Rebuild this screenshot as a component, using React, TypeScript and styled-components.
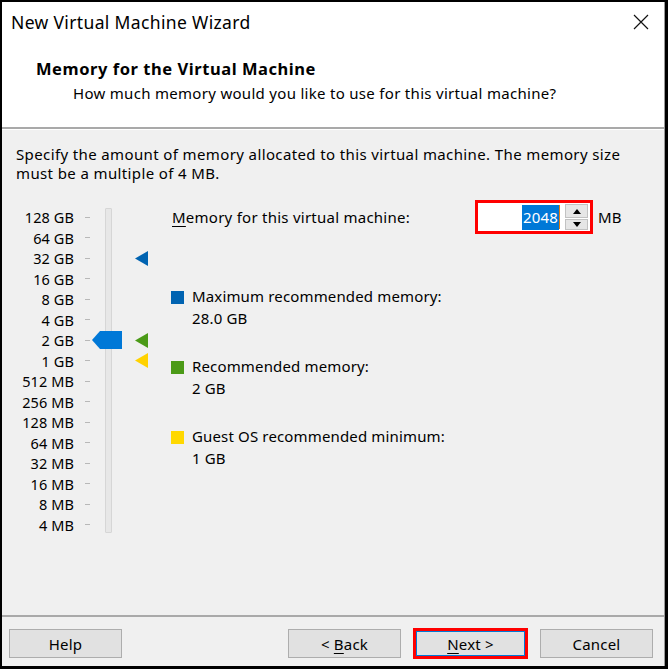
import React from "react";
import styled, { createGlobalStyle } from "styled-components";

const GlobalStyle = createGlobalStyle`
  html, body { margin: 0; padding: 0; background: #000; }
  body { font-family: "Noto Sans", "Liberation Sans", sans-serif; color: #000; }
  * { box-sizing: border-box; }
`;

const Frame = styled.div`
  width: 668px;
  height: 669px;
  border-style: solid;
  border-color: #000;
  border-width: 2px 3px 3px 2px;
  background: #f0f0f0;
  display: flex;
  flex-direction: column;
  overflow: hidden;
`;

const Window = styled.div`
  flex: 1;
  display: flex;
  flex-direction: column;
  border-right: 1px solid #9a9a9a;
  background: #f0f0f0;
`;

const Header = styled.div`
  height: 125px;
  background: #fff;
  display: flex;
  flex-direction: column;
`;

const TitleBar = styled.div`
  height: 40px;
  display: flex;
  align-items: center;
  justify-content: space-between;
  padding: 0 15px 0 9px;
`;

const TitleText = styled.div`
  font-size: 17.5px;
  letter-spacing: 0.35px;
`;

const HeaderTitle = styled.div`
  margin: 17px 0 0 34px;
  font-size: 16.5px;
  font-weight: 700;
  line-height: 20px;
  letter-spacing: 0.55px;
`;

const HeaderSub = styled.div`
  margin: 4px 0 0 71px;
  font-size: 15px;
  line-height: 20px;
  letter-spacing: 0.3px;
`;

const Separator = styled.div`
  height: 3px;
  border-top: 2px solid #a9a9a9;
  border-bottom: 1px solid #ffffff;
`;

const Body = styled.div`
  flex: 1;
  padding: 15px 0 0 14px;
  display: flex;
  flex-direction: column;
`;

const Description = styled.p`
  margin: 0;
  font-size: 15px;
  line-height: 19px;
  letter-spacing: 0.38px;
  white-space: nowrap;
`;

const Main = styled.div`
  display: flex;
  align-items: flex-start;
  margin-top: 17px;
`;

const Scale = styled.div`
  display: grid;
  grid-template-columns: 58px 18px 30px 28px;
  grid-auto-rows: 20.5px;
  margin-top: 7px;
`;

const ScaleLabel = styled.div<{ $row: number }>`
  grid-column: 1;
  grid-row: ${(p) => p.$row};
  text-align: right;
  font-size: 14.5px;
  line-height: 20.5px;
  letter-spacing: 0.1px;
  white-space: nowrap;
`;

const Tick = styled.div<{ $row: number }>`
  grid-column: 2;
  grid-row: ${(p) => p.$row};
  align-self: center;
  width: 5px;
  height: 1px;
  margin-left: 11px;
  background: #b8b8b8;
`;

const Track = styled.div`
  grid-column: 3;
  grid-row: 1 / span 16;
  width: 7px;
  margin: 1px 0 2px 13px;
  background: #e7e7e7;
  border: 1px solid #d6d6d6;
  border-radius: 1px;
`;

const Thumb = styled.svg`
  grid-column: 3;
  grid-row: 7;
  align-self: center;
  z-index: 1;
`;

const Marker = styled.svg<{ $row: number }>`
  grid-column: 4;
  grid-row: ${(p) => p.$row};
  align-self: center;
  margin-left: 13px;
`;

const Right = styled.div`
  margin-left: 22px;
  display: flex;
  flex-direction: column;
`;

const MemoryRow = styled.div`
  display: flex;
  align-items: center;
`;

const MemoryLabel = styled.div`
  width: 303px;
  font-size: 15px;
  letter-spacing: 0.25px;
  u { text-decoration-thickness: 1px; text-underline-offset: 3px; }
`;

const RedBox = styled.div`
  width: 118px;
  height: 34px;
  border: 3px solid #ff0000;
  background: #fff;
  display: flex;
  align-items: center;
  padding-right: 2px;
`;

const Field = styled.div`
  flex: 1;
  display: flex;
  justify-content: flex-end;
  align-items: center;
  padding-right: 5px;
`;

const Selected = styled.span`
  background: #0078d7;
  color: #fff;
  font-size: 15px;
  line-height: 25px;
  padding: 0 1px;
  letter-spacing: 0.2px;
`;

const Caret = styled.span`
  width: 1px;
  height: 24px;
  background: #e07a10;
`;

const Spinner = styled.div`
  width: 23px;
  height: 26px;
  display: flex;
  flex-direction: column;
  gap: 1px;
`;

const SpinButton = styled.div<{ $h: number }>`
  height: ${(p) => p.$h}px;
  background: #e6e6e6;
  border: 1px solid #c2c2c2;
  display: flex;
  align-items: center;
  justify-content: center;
`;

const Unit = styled.div`
  margin-left: 5px;
  font-size: 15px;
  letter-spacing: 0.1px;
`;

const Legend = styled.div`
  margin-top: 52px;
  display: flex;
  flex-direction: column;
  gap: 27px;
`;

const LegendItem = styled.div`
  display: flex;
  align-items: flex-start;
`;

const Swatch = styled.div<{ $color: string }>`
  width: 13px;
  height: 13px;
  margin: 5px 8px 0 -1px;
  background: ${(p) => p.$color};
`;

const LegendText = styled.div`
  font-size: 15px;
  line-height: 21.5px;
  letter-spacing: 0.15px;
`;

const Footer = styled.div`
  height: 51px;
  border-top: 2px solid #a9a9a9;
  display: flex;
  align-items: flex-start;
  padding: 12px 11px 0 7px;
`;

const Spacer = styled.div`
  flex: 1;
`;

const Button = styled.div<{ $focused?: boolean }>`
  width: 113px;
  height: 29px;
  background: #e1e1e1;
  border: 1px solid #adadad;
  display: flex;
  align-items: center;
  justify-content: center;
  font-size: 15px;
  letter-spacing: 0.2px;
  margin-left: ${(p) => (p.$focused ? "13px" : "0")};
  margin-right: ${(p) => (p.$focused ? "13px" : "0")};
  ${(p) =>
    p.$focused
      ? `border-color: #0078d7; box-shadow: inset 0 0 0 2px #0078d7; outline: 3px solid #ff0000; outline-offset: -2px;`
      : ""}
  u { text-decoration-thickness: 1px; text-underline-offset: 3px; }
`;

const labels = [
  "128 GB", "64 GB", "32 GB", "16 GB", "8 GB", "4 GB", "2 GB", "1 GB",
  "512 MB", "256 MB", "128 MB", "64 MB", "32 MB", "16 MB", "8 MB", "4 MB",
];

const Triangle: React.FC<{ row: number; color: string }> = ({ row, color }) => (
  <Marker $row={row} width="13" height="15" viewBox="0 0 13 15">
    <polygon points="0,7.5 13,0 13,15" fill={color} />
  </Marker>
);

export default function App() {
  return (
    <>
      <GlobalStyle />
      <Frame>
        <Window>
          <Header>
            <TitleBar>
              <TitleText>New Virtual Machine Wizard</TitleText>
              <svg width="16" height="16" viewBox="0 0 16 16">
                <path d="M1 1 L15 15 M15 1 L1 15" stroke="#111" strokeWidth="1.2" />
              </svg>
            </TitleBar>
            <HeaderTitle>Memory for the Virtual Machine</HeaderTitle>
            <HeaderSub>How much memory would you like to use for this virtual machine?</HeaderSub>
          </Header>
          <Separator />
          <Body>
            <Description>
              Specify the amount of memory allocated to this virtual machine. The memory size
              <br />
              must be a multiple of 4 MB.
            </Description>
            <Main>
              <Scale>
                {labels.map((l, i) => (
                  <React.Fragment key={l}>
                    <ScaleLabel $row={i + 1}>{l}</ScaleLabel>
                    <Tick $row={i + 1} />
                  </React.Fragment>
                ))}
                <Track />
                <Thumb width="30" height="18" viewBox="0 0 30 18">
                  <polygon points="0,9 8,0 30,0 30,18 8,18" fill="#0078d7" />
                </Thumb>
                <Triangle row={3} color="#0063b1" />
                <Triangle row={7} color="#4b9a17" />
                <Triangle row={8} color="#ffd200" />
              </Scale>
              <Right>
                <MemoryRow>
                  <MemoryLabel>
                    <u>M</u>emory for this virtual machine:
                  </MemoryLabel>
                  <RedBox>
                    <Field>
                      <Selected>2048</Selected>
                      <Caret />
                    </Field>
                    <Spinner>
                      <SpinButton $h={14}>
                        <svg width="8" height="5" viewBox="0 0 8 5">
                          <polygon points="0,5 4,0 8,5" fill="#000" />
                        </svg>
                      </SpinButton>
                      <SpinButton $h={11}>
                        <svg width="8" height="5" viewBox="0 0 8 5">
                          <polygon points="0,0 8,0 4,5" fill="#000" />
                        </svg>
                      </SpinButton>
                    </Spinner>
                  </RedBox>
                  <Unit>MB</Unit>
                </MemoryRow>
                <Legend>
                  <LegendItem>
                    <Swatch $color="#0063b1" />
                    <LegendText>
                      Maximum recommended memory:
                      <br />
                      28.0 GB
                    </LegendText>
                  </LegendItem>
                  <LegendItem>
                    <Swatch $color="#4b9a17" />
                    <LegendText>
                      Recommended memory:
                      <br />
                      2 GB
                    </LegendText>
                  </LegendItem>
                  <LegendItem>
                    <Swatch $color="#ffd800" />
                    <LegendText>
                      Guest OS recommended minimum:
                      <br />
                      1 GB
                    </LegendText>
                  </LegendItem>
                </Legend>
              </Right>
            </Main>
          </Body>
          <Footer>
            <Button>Help</Button>
            <Spacer />
            <Button>
              &lt;&nbsp;<u>B</u>ack
            </Button>
            <Button $focused>
              <u>N</u>ext &gt;
            </Button>
            <Button>Cancel</Button>
          </Footer>
        </Window>
      </Frame>
    </>
  );
}
